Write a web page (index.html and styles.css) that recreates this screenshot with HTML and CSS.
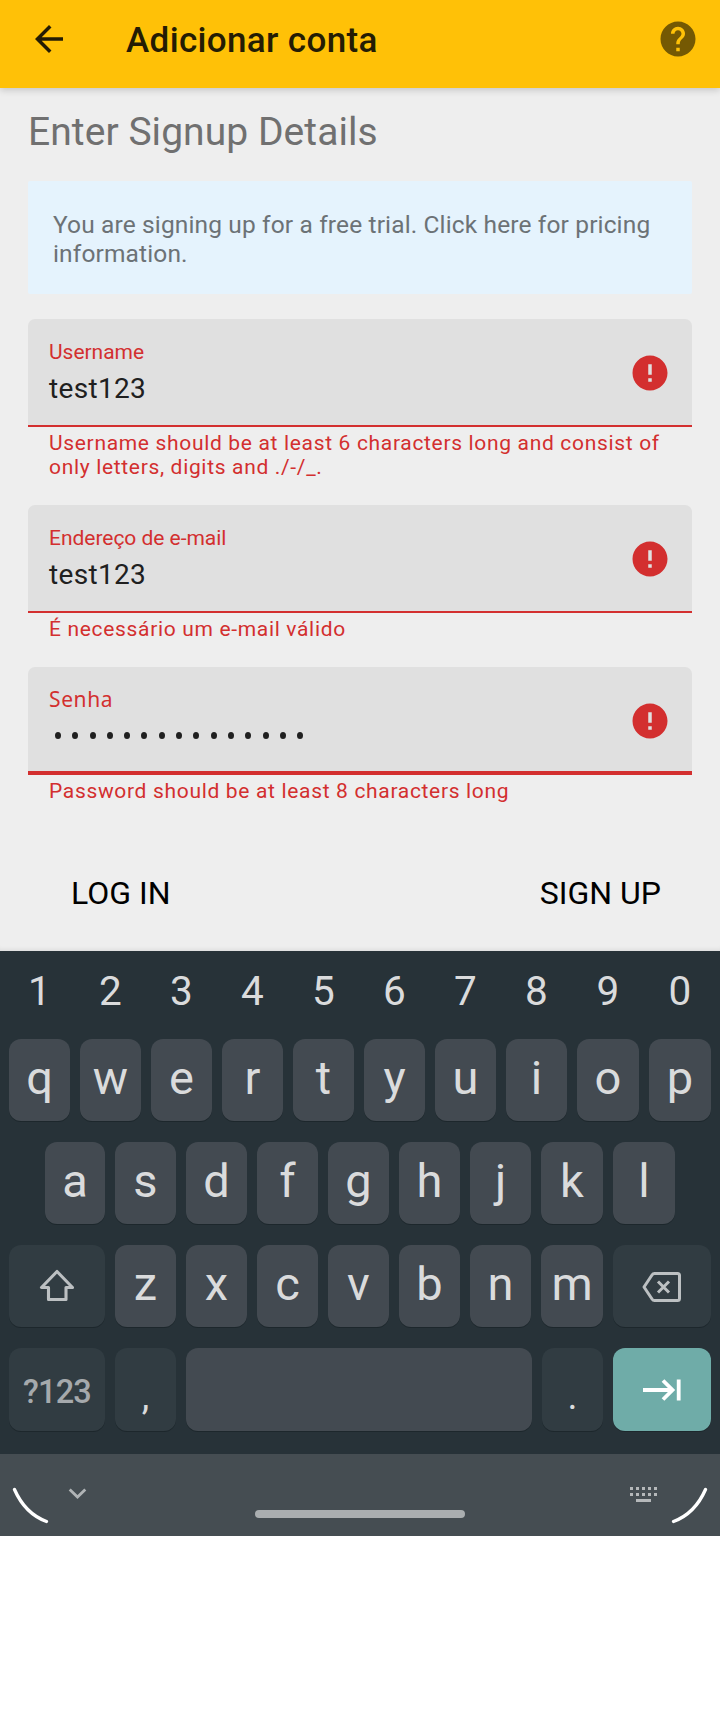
FILE: index.html
```html
<!DOCTYPE html>
<html lang="pt">
<head>
<meta charset="utf-8">
<title>Adicionar conta</title>
<link rel="stylesheet" href="styles.css">
</head>
<body>
<header class="appbar">
  <svg class="back" width="42" height="42" viewBox="0 0 24 24"><path d="M20 11H7.83l5.59-5.59L12 4l-8 8 8 8 1.41-1.41L7.83 13H20v-2z"/></svg>
  <h1 class="appbar-title">Adicionar conta</h1>
  <svg class="help" width="42" height="42" viewBox="0 0 24 24"><path d="M12 2C6.48 2 2 6.48 2 12s4.48 10 10 10 10-4.48 10-10S17.52 2 12 2zm1 17h-2v-2h2v2zm2.07-7.75l-.9.92C13.45 12.9 13 13.5 13 15h-2v-.5c0-1.1.45-2.1 1.17-2.83l1.24-1.26c.37-.36.59-.86.59-1.41 0-1.1-.9-2-2-2s-2 .9-2 2H8c0-2.21 1.79-4 4-4s4 1.79 4 4c0 .88-.36 1.68-.93 2.25z"/></svg>
</header>
<main class="content">
  <h2 class="heading">Enter Signup Details</h2>
  <p class="notice">You are signing up for a free trial. Click here for pricing<br>information.</p>
  <section class="group">
    <div class="field">
      <div class="field-text"><span class="label">Username</span><span class="value">test123</span></div>
      <svg class="error" width="42" height="42" viewBox="0 0 24 24"><path d="M12 2C6.48 2 2 6.48 2 12s4.48 10 10 10 10-4.48 10-10S17.52 2 12 2zm1 15h-2v-2h2v2zm0-4h-2V7h2v6z"/></svg>
    </div>
    <p class="helper">Username should be at least 6 characters long and consist of<br>only letters, digits and ./-/_.</p>
  </section>
  <section class="group">
    <div class="field">
      <div class="field-text"><span class="label">Endereço de e-mail</span><span class="value">test123</span></div>
      <svg class="error" width="42" height="42" viewBox="0 0 24 24"><path d="M12 2C6.48 2 2 6.48 2 12s4.48 10 10 10 10-4.48 10-10S17.52 2 12 2zm1 15h-2v-2h2v2zm0-4h-2V7h2v6z"/></svg>
    </div>
    <p class="helper">É necessário um e-mail válido</p>
  </section>
  <section class="group">
    <div class="field focused">
      <div class="field-text"><span class="label label-password">Senha</span>
        <span class="dots"><i></i><i></i><i></i><i></i><i></i><i></i><i></i><i></i><i></i><i></i><i></i><i></i><i></i><i></i><i></i></span>
      </div>
      <svg class="error" width="42" height="42" viewBox="0 0 24 24"><path d="M12 2C6.48 2 2 6.48 2 12s4.48 10 10 10 10-4.48 10-10S17.52 2 12 2zm1 15h-2v-2h2v2zm0-4h-2V7h2v6z"/></svg>
    </div>
    <p class="helper">Password should be at least 8 characters long</p>
  </section>
  <div class="actions"><span class="action login">LOG IN</span><span class="action signup">SIGN UP</span></div>
</main>
<div class="keyboard">
  <div class="row numbers"><span>1</span><span>2</span><span>3</span><span>4</span><span>5</span><span>6</span><span>7</span><span>8</span><span>9</span><span>0</span></div>
  <div class="row row-q"><b class="key">q</b><b class="key">w</b><b class="key">e</b><b class="key">r</b><b class="key">t</b><b class="key">y</b><b class="key">u</b><b class="key">i</b><b class="key">o</b><b class="key">p</b></div>
  <div class="row row-a"><b class="key">a</b><b class="key">s</b><b class="key">d</b><b class="key">f</b><b class="key">g</b><b class="key">h</b><b class="key">j</b><b class="key">k</b><b class="key">l</b></div>
  <div class="row row-z">
    <b class="key dark icon"><svg width="36" height="34" viewBox="0 0 36 34"><path d="M18 2.500L2.500 18.500H9.500V30.500H27V18.500H33.500Z" fill="none" stroke="#bcc0c2" stroke-width="3.100" stroke-linejoin="round"/></svg></b>
    <b class="key">z</b><b class="key">x</b><b class="key">c</b><b class="key">v</b><b class="key">b</b><b class="key">n</b><b class="key">m</b>
    <b class="key dark icon"><svg class="delete" width="40" height="32" viewBox="0 0 40 32"><path d="M12.500 2.500H35.500Q37.500 2.500 37.500 4.500V27.500Q37.500 29.500 35.500 29.500H12.500Q11 29.500 10 28L2 16L10 4Q11 2.500 12.500 2.500ZM16 10.500L27 21.500M27 10.500L16 21.500" fill="none" stroke="#bcc0c2" stroke-width="3" stroke-linejoin="round"/></svg></b>
  </div>
  <div class="row row-space">
    <b class="key dark symbols">?123</b>
    <b class="key dark punct">,</b>
    <b class="key"></b>
    <b class="key dark punct">.</b>
    <b class="key next icon"><svg width="38" height="24" viewBox="0 0 38 24"><path d="M0 12H29M20 2.500L29.500 12L20 21.500M35.700 1.500V22.500" fill="none" stroke="#fff" stroke-width="3.800"/></svg></b>
  </div>
</div>
<footer class="navbar">
  <svg width="720" height="82" viewBox="0 0 720 82" fill="none">
    <path d="M14.500 35.500Q25 59.500 46.500 67.500M705.500 35.500Q695 59.500 673.500 67.500" stroke="#fff" stroke-width="3.300" stroke-linecap="round"/>
    <path d="M69.700 35.500L77.500 43L85.300 35.500" stroke="#b0b4b6" stroke-width="2.800"/>
    <rect x="255" y="56" width="210" height="8" rx="4" fill="#aaaeb0"/>
    <path d="M630 34.500H657M630 40.500H657" stroke="#b5b8ba" stroke-width="3" stroke-dasharray="3 3"/>
    <path d="M636 46.500H651" stroke="#b5b8ba" stroke-width="3"/>
  </svg>
</footer>
</body>
</html>
```
FILE: styles.css
```css
* { box-sizing: border-box; }
body { margin: 0; background: #fff; font-family: Roboto, "Liberation Sans", sans-serif; width: 720px; }
h1, h2, p { margin: 0; font-weight: 400; }
svg { display: block; flex: none; }

.appbar { position: relative; display: flex; align-items: center; height: 88px; padding: 0 21px 10px 28px; background: #ffc107; box-shadow: 0 2px 7px rgba(0,0,0,.18); z-index: 1; }
.back { fill: #241c04; }
.appbar-title { flex: 1; margin-left: 56px; font-size: 35px; font-weight: 500; line-height: 42px; letter-spacing: .35px; color: #241c04; white-space: nowrap; padding-top: 3px; }
.help { fill: #755903; }

.content { height: 863px; padding: 20px 28px 0; background: #eee; box-shadow: inset 0 -5px 5px -4px rgba(0,0,0,.09); }
.heading { height: 73px; font-size: 39px; line-height: 48px; letter-spacing: .06px; color: #707070; white-space: nowrap; }
.notice { height: 113px; padding: 29px 25px; border-radius: 2px; background: #e5f3fd; color: #6c7276; font-size: 24.5px; line-height: 29px; letter-spacing: .135px; white-space: nowrap; margin-bottom: 25px; }

.group { display: flex; flex-direction: column; }
.group:nth-of-type(1) { height: 186px; }
.group:nth-of-type(2) { height: 162px; }
.group:nth-of-type(3) { height: 194px; }
.field { display: flex; justify-content: space-between; align-items: flex-start; height: 108px; padding: 20px 21px 0; background: #e0e0e0; border-bottom: 2px solid #d32f2f; border-radius: 7px 7px 0 0; }
.focused { border-bottom-width: 4px; }
.field-text { display: flex; flex-direction: column; }
.label { font-size: 21px; line-height: 26px; letter-spacing: -.03px; color: #d32f2f; }
.label-password { font-family: "Noto Sans", sans-serif; letter-spacing: .6px; line-height: 24px; }
.value { margin-top: 6px; font-size: 28px; line-height: 36px; color: #202020; letter-spacing: .33px; }
.dots { display: flex; gap: 11.300px; padding: 21px 0 0 6px; }
.dots i { width: 6px; height: 7px; border-radius: 50%; background: #202020; }
.error { fill: #d32f2f; margin-top: 13px; }
.helper { padding: 4px 21px 0; font-size: 21px; line-height: 24px; letter-spacing: .67px; color: #d32f2f; white-space: nowrap; }

.actions { display: flex; justify-content: space-between; padding: 12px 31px 0 43px; }
.action { font-size: 32px; line-height: 40px; color: #000; }

.keyboard { display: flex; flex-direction: column; gap: 21px; height: 503px; padding: 0 9px; background: #273238; color: #dadbdc; }
.row { display: grid; column-gap: 10px; height: 82px; grid-template-rows: 100%; }
.numbers { grid-template-columns: repeat(8, 61px) 62px 62px; height: 67px; font-size: 40.500px; line-height: 80px; text-align: center; }
.row-q { grid-template-columns: repeat(8, 61px) 62px 62px; }
.row-a { grid-template-columns: 60px repeat(6, 61px) 62px 62px; padding-left: 36px; }
.row-z { grid-template-columns: 96px repeat(6, 61px) 62px 98px; }
.row-space { grid-template-columns: 96px 61px 346px 61px 98px; height: 83px; }
.key { display: flex; align-items: center; justify-content: center; padding-bottom: 4px; border-radius: 12px; background: #434a51; box-shadow: 0 1px 0 #1d272c; font-size: 47px; font-weight: 400; line-height: 56px; }
.icon { padding: 0; }
.dark { background: #313c42; }
.symbols { font-size: 32.500px; font-weight: 500; letter-spacing: -.8px; color: #a5a9ac; padding: 4px 0 0; }
.punct { font-size: 38px; padding: 13px 0 0; }
.next { background: #6faca8; }
.delete { margin-top: 2px; }
.navbar { height: 82px; background: #454d52; }
```
